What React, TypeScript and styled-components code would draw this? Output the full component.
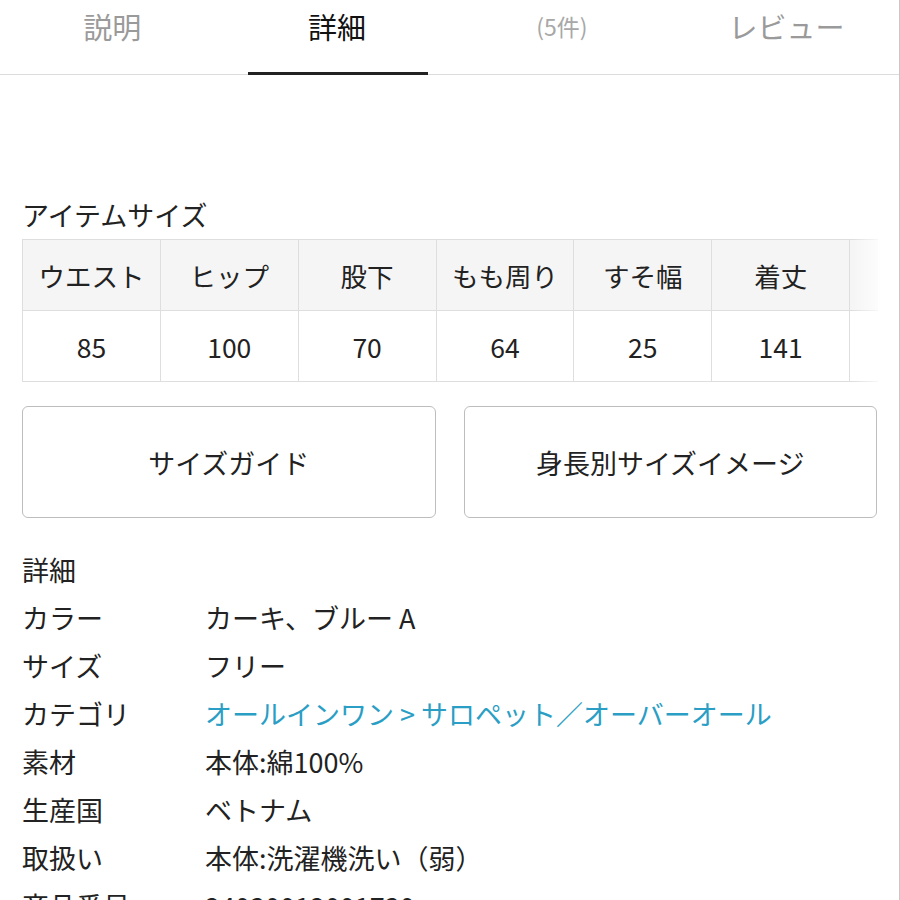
import React from 'react'
import styled, { createGlobalStyle } from 'styled-components'

const GlobalStyle = createGlobalStyle`
  html, body {
    margin: 0;
    padding: 0;
    background: #fff;
  }
  body {
    font-family: 'Noto Sans CJK JP', 'Noto Sans', sans-serif;
    color: #222;
  }
`

const tabs = [
  { label: '説明' },
  { label: '詳細', active: true },
  { label: '(5件)', small: true },
  { label: 'レビュー' },
]

const sizeCols = [
  ['ウエスト', '85'],
  ['ヒップ', '100'],
  ['股下', '70'],
  ['もも周り', '64'],
  ['すそ幅', '25'],
  ['着丈', '141'],
  ['', ''],
]

const details: { label: string; value: string; link?: boolean }[] = [
  { label: 'カラー', value: 'カーキ、ブルー A' },
  { label: 'サイズ', value: 'フリー' },
  { label: 'カテゴリ', value: 'オールインワン > サロペット／オーバーオール', link: true },
  { label: '素材', value: '本体:綿100%' },
  { label: '生産国', value: 'ベトナム' },
  { label: '取扱い', value: '本体:洗濯機洗い（弱）' },
  { label: '商品番号', value: '24030012001730' },
]

const App: React.FC = () => {
  return (
    <>
      <GlobalStyle />
      <Page>
        <TabBar>
          {tabs.map((t) => (
            <Tab key={t.label} $active={t.active}>
              <TabLabel $active={t.active} $small={t.small}>
                {t.label}
              </TabLabel>
            </Tab>
          ))}
        </TabBar>

        <Content>
          <SectionTitle>アイテムサイズ</SectionTitle>
          <TableWrap>
            <SizeTable>
              <thead>
                <tr>
                  {sizeCols.map(([h], i) => (
                    <HeadCell key={i}>{h}</HeadCell>
                  ))}
                </tr>
              </thead>
              <tbody>
                <tr>
                  {sizeCols.map(([, v], i) => (
                    <BodyCell key={i}>{v}</BodyCell>
                  ))}
                </tr>
              </tbody>
            </SizeTable>
            <Fade />
          </TableWrap>

          <ButtonRow>
            <GuideButton>サイズガイド</GuideButton>
            <GuideButton>身長別サイズイメージ</GuideButton>
          </ButtonRow>

          <DetailTitle>詳細</DetailTitle>
          <DetailList>
            {details.map((d) => (
              <DetailRow key={d.label}>
                <DetailLabel>{d.label}</DetailLabel>
                <DetailValue $link={d.link}>{d.value}</DetailValue>
              </DetailRow>
            ))}
          </DetailList>
        </Content>
      </Page>
    </>
  )
}

const Page = styled.div`
  width: 900px;
  height: 900px;
  overflow: hidden;
  box-sizing: border-box;
  border-right: 1px solid #c8c8c8;
  background: #fff;
`

const TabBar = styled.div`
  display: grid;
  grid-template-columns: repeat(4, 1fr);
  height: 75px;
  border-bottom: 1px solid #dcdcdc;
  box-sizing: border-box;
`

const Tab = styled.div<{ $active?: boolean }>`
  position: relative;
  display: flex;
  justify-content: center;
  padding-top: 6px;
  &::after {
    content: '';
    display: ${(p) => (p.$active ? 'block' : 'none')};
    position: absolute;
    left: 23px;
    right: 22px;
    bottom: -1px;
    height: 3px;
    background: #222;
  }
`

const TabLabel = styled.span<{ $active?: boolean; $small?: boolean }>`
  font-size: ${(p) => (p.$small ? '23px' : '29px')};
  line-height: 40px;
  color: ${(p) => (p.$active ? '#111' : p.$small ? '#a8a8a8' : '#9a9a9a')};
`

const Content = styled.div`
  padding: 121px 22px 0 22px;
`

const SectionTitle = styled.div`
  font-size: 27px;
  line-height: 38px;
  margin-bottom: 5px;
  color: #222;
`

const TableWrap = styled.div`
  position: relative;
  width: 856px;
  overflow: hidden;
`

const SizeTable = styled.table`
  border-collapse: collapse;
  table-layout: fixed;
  width: 966px;
`

const HeadCell = styled.th`
  height: 70px;
  padding: 0;
  background: #f5f5f5;
  border: 1px solid #dedede;
  font-weight: 400;
  font-size: 26.5px;
  color: #222;
  text-align: center;
`

const BodyCell = styled.td`
  height: 70px;
  padding: 0;
  background: #fff;
  border: 1px solid #dedede;
  font-size: 26.5px;
  color: #222;
  text-align: center;
`

const Fade = styled.div`
  position: absolute;
  top: 0;
  right: 0;
  width: 26px;
  height: 100%;
  background: linear-gradient(to right, rgba(255, 255, 255, 0), rgba(255, 255, 255, 0.75));
`

const ButtonRow = styled.div`
  display: grid;
  grid-template-columns: 1fr 1fr;
  gap: 28px;
  margin-top: 24px;
`

const GuideButton = styled.button`
  height: 112px;
  background: #fff;
  border: 1.5px solid #bdbdbd;
  border-radius: 6px;
  font-family: 'Noto Sans CJK JP', sans-serif;
  font-size: 27px;
  color: #222;
  cursor: pointer;
`

const DetailTitle = styled.div`
  margin-top: 28px;
  font-size: 27px;
  line-height: 48px;
`

const DetailList = styled.div`
  display: flex;
  flex-direction: column;
`

const DetailRow = styled.div`
  display: flex;
  line-height: 48px;
  font-size: 27px;
`

const DetailLabel = styled.div`
  width: 183px;
  flex-shrink: 0;
  color: #222;
`

const DetailValue = styled.div<{ $link?: boolean }>`
  color: ${(p) => (p.$link ? '#2a9ec4' : '#222')};
  white-space: nowrap;
`

export default App
